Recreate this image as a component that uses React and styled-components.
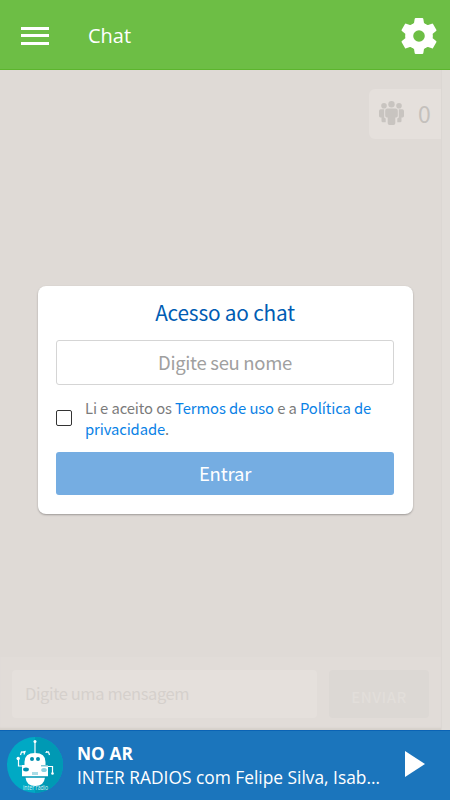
import { useState } from 'react'
import styled, { createGlobalStyle } from 'styled-components'

const GlobalStyle = createGlobalStyle`
  * {
    box-sizing: border-box;
  }

  body {
    margin: 0;
    font-family: 'Open Sans', 'Noto Sans', sans-serif;
  }

  button,
  input {
    font-family: inherit;
  }
`

export default function App() {
  return (
    <>
      <GlobalStyle/>
      <Screen>
        <Header>
          <MenuButton aria-label='Menu'><i/><i/><i/></MenuButton>
          <PageTitle>Chat</PageTitle>
          <IconButton aria-label='Configurações'><GearIcon/></IconButton>
        </Header>
        <ChatRoom/>
        <Player/>
      </Screen>
    </>
  )
}

function ChatRoom() {
  const [name, setName] = useState(''),
        [accepted, setAccepted] = useState(false)

  return (
    <Room>
      <Conversation>
        <Counter><PeopleIcon/>0</Counter>
        <MessageBar>
          <MessageInput placeholder='Digite uma mensagem' disabled/>
          <SendButton disabled>ENVIAR</SendButton>
        </MessageBar>
      </Conversation>
      <ScrollTrack/>
      <Overlay>
        <Card>
          <CardTitle>Acesso ao chat</CardTitle>
          <NameInput
            placeholder='Digite seu nome'
            value={name}
            onChange={e => setName(e.target.value)}
          />
          <Terms>
            <Checkbox
              type='checkbox'
              checked={accepted}
              onChange={e => setAccepted(e.target.checked)}
            />
            <span>Li e aceito os <a>Termos de uso</a> e a <a>Política de privacidade</a>.</span>
          </Terms>
          <EnterButton>Entrar</EnterButton>
        </Card>
      </Overlay>
    </Room>
  )
}

function Player() {
  return (
    <PlayerBar>
      <RobotLogo/>
      <NowPlaying>
        <strong>NO AR</strong>
        <p>INTER RADIOS com Felipe Silva, Isabela Costa</p>
      </NowPlaying>
      <PlayButton aria-label='Tocar'>
        <svg width='20' height='26' viewBox='0 0 20 26'><path d='M0 0L20 13L0 26Z' fill='#fff'/></svg>
      </PlayButton>
    </PlayerBar>
  )
}

function GearIcon() {
  const teeth = [0, 60, 120, 180, 240, 300]

  return (
    <svg width='36' height='38' viewBox='-18 -19 36 38'>
      <circle r='9.500' fill='none' stroke='#fff' strokeWidth='7.400'/>
      {teeth.map(angle => (
        <path
          key={angle}
          transform={`rotate(${angle})`}
          d='M-3.300 -17.100H3.300L4.100 -12.400L6.200 -11L3 -8H-3L-6.200 -11L-4.100 -12.400Z'
          fill='#fff'
          stroke='#fff'
          strokeWidth='2'
          strokeLinejoin='round'
        />
      ))}
    </svg>
  )
}

function PeopleIcon() {
  return (
    <svg width='25' height='24' viewBox='0 0 25 24' fill='#c8c4c0'>
      <circle cx='5' cy='4.700' r='2.800'/>
      <circle cx='20' cy='4.700' r='2.800'/>
      <circle cx='12.500' cy='3.200' r='3.200'/>
      <path d='M1.800 8.300h3.400v8.200l1.500 1v3.800H3.800q-1.300 0-1.300-1.300v-3.600H1.400Q0 16.400 0 15v-4.900Q0 8.300 1.800 8.300z'/>
      <path d='M23.200 8.300h-3.400v8.200l-1.500 1v3.800h2.900q1.300 0 1.300-1.300v-3.600h1.100q1.400 0 1.400-1.400v-4.900q0-1.800-1.800-1.800z'/>
      <path d='M8.500 7.400h8q2.300 0 2.300 2.200v5.200q0 1.600-1.600 1.600h-.9v5.800q0 1.800-1.800 1.800h-4q-1.800 0-1.800-1.800v-5.800h-.9q-1.600 0-1.600-1.600V9.600q0-2.200 2.300-2.200z'/>
    </svg>
  )
}

function RobotLogo() {
  return (
    <svg width='56' height='56' viewBox='0 0 56 56'>
      <circle cx='28' cy='28' r='28' fill='#00a9c4'/>
      <path d='M28 0a28 28 0 0 1 0 56z' fill='#0099b4'/>
      <g fill='none' stroke='#fff' strokeWidth='1.200'>
        <path d='M28 5v13M11.500 23v6H17M40 29.500h5.500V36'/>
        <path d='M13.500 18l1-3 3 .5M15 15l3-.5-1 3M38.500 15.500l3-.5 1 3M39 14.500l3 .8'/>
      </g>
      <g fill='#fff'>
        <circle cx='28' cy='4.500' r='1.500'/>
        <circle cx='11.200' cy='21.500' r='1.700'/>
        <circle cx='45.500' cy='36.500' r='1.300'/>
        <path d='M17.500 25q0-9 10.500-9t10.500 9v3h2.500v11.500H15V28h2.500z'/>
        <path d='M18.500 40.500h19.500q-1 8.500-9.800 8.500t-9.700-8.500z'/>
      </g>
      <g fill='#008fae'>
        <circle cx='25' cy='22' r='2'/>
        <circle cx='31' cy='22' r='2'/>
        <ellipse cx='19' cy='32.500' rx='2.900' ry='1.900'/>
        <path d='M15 39.500h26v1H15zM34 28.500h7v.8H34z'/>
      </g>
      <ellipse cx='37' cy='33' rx='2.800' ry='2' fill='#8bd2e2'/>
      <rect x='25' y='35' width='6' height='3' fill='#a9dce6'/>
      <text x='28.500' y='52.500' textAnchor='middle' textLength='25' lengthAdjust='spacingAndGlyphs' fontSize='6.800' fontFamily='Open Sans, sans-serif' fill='#d5f2f7'>inter radio</text>
    </svg>
  )
}

const chatFont = `'Noto Sans CJK SC', 'Source Sans Pro', sans-serif`

const Screen = styled.div`
  display: flex;
  flex-direction: column;
  height: 100vh;
  overflow: hidden;
`

const Header = styled.header`
  display: flex;
  align-items: center;
  flex: 0 0 70px;
  padding: 2px 13px 0 21px;
  background: #6dbe45;
  border-bottom: 1px solid #5cb52d;
  color: #fff;
`

const IconButton = styled.button`
  display: flex;
  padding: 0;
  border: 0;
  background: none;
  color: #fff;
  cursor: pointer;
`

const MenuButton = styled(IconButton)`
  flex-direction: column;
  gap: 4.500px;
  width: 28px;

  i {
    height: 3px;
    background: #fff;
  }
`

const PageTitle = styled.h1`
  flex: 1;
  margin: 0 0 0 39px;
  font-size: 20px;
  font-weight: 400;
`

const Room = styled.main`
  position: relative;
  display: flex;
  flex: 1;
  min-height: 0;
  background: #dfdad6;
  font-family: ${chatFont};
`

const Conversation = styled.section`
  display: flex;
  flex: 1;
  flex-direction: column;
  justify-content: space-between;
  align-items: flex-end;
  padding-top: 19px;
`

const ScrollTrack = styled.div`
  width: 9px;
  border-left: 1px solid #dbd7d3;
  background: #e1ddd9;
`

const Counter = styled.div`
  display: flex;
  align-items: center;
  gap: 14px;
  width: 72px;
  height: 50px;
  padding: 0 0 2px 10px;
  border-radius: 6px 0 0 6px;
  background: #e5e0dc;
  color: #c4c0bc;
  font-size: 23px;
  line-height: 1;
`

const MessageBar = styled.div`
  display: flex;
  align-self: stretch;
  gap: 12px;
  height: 73px;
  padding: 13px 12px;
  background: #e1dcd8;
  box-shadow: inset 0 -3px 2px -1px #d5d0cb;
`

const MessageInput = styled.input`
  flex: 1;
  min-width: 0;
  height: 48px;
  padding: 0 13px 2px;
  border: 0;
  border-radius: 4px;
  background: #e5e0dc;
  font-size: 16.500px;
  letter-spacing: -.4px;

  &::placeholder {
    color: #d5d0cc;
    opacity: 1;
  }
`

const SendButton = styled.button`
  width: 100px;
  height: 48px;
  padding: 5px 0 0;
  border: 0;
  border-radius: 4px;
  background: #dcd8d4;
  color: #e2deda;
  font-size: 15px;
  font-weight: 500;
  letter-spacing: .5px;
`

const Overlay = styled.div`
  position: absolute;
  inset: 0;
  display: flex;
  align-items: center;
  justify-content: center;
`

const Card = styled.form`
  display: flex;
  flex-direction: column;
  width: 375px;
  height: 228px;
  padding: 11px 18.500px 19px;
  border-radius: 8px;
  background: #fff;
  box-shadow: 0 1px 2px rgba(0, 0, 0, .3);
`

const CardTitle = styled.h2`
  margin: 0 0 13px;
  color: #005cb3;
  font-size: 20.800px;
  font-weight: 400;
  letter-spacing: -.2px;
  line-height: 30px;
  text-align: center;
`

const NameInput = styled.input`
  height: 45px;
  padding: 0 0 2px;
  border: 1px solid #d5d5d5;
  border-radius: 3px;
  color: #555;
  font-size: 18.500px;
  letter-spacing: -.3px;
  text-align: center;

  &::placeholder {
    color: #a0a0a0;
    opacity: 1;
  }
`

const Terms = styled.label`
  display: flex;
  align-items: center;
  gap: 13px;
  margin: 12px 0 13px;
  color: #7b7b7b;
  font-size: 14.800px;
  letter-spacing: -.1px;
  line-height: 21px;

  a {
    color: #0a82e6;
  }
`

const Checkbox = styled.input`
  flex: none;
  width: 16px;
  height: 16px;
  margin: 0;
  appearance: none;
  border: 1px solid #333;
  border-radius: 2px;

  &:checked {
    background: #0a82e6;
  }
`

const EnterButton = styled.button`
  height: 43px;
  padding: 0 0 2px;
  border: 0;
  border-radius: 3px;
  background: #75ade2;
  color: #fff;
  font-size: 18.500px;
  letter-spacing: -.2px;
`

const PlayerBar = styled.footer`
  display: flex;
  align-items: center;
  flex: 0 0 70px;
  padding: 0 25px 1px 7px;
  border-top: 1px solid #0b63b4;
  background: #1b75bc;
  color: #fff;
`

const NowPlaying = styled.div`
  width: 306px;
  margin-left: 14px;
  font-size: 17.350px;
  line-height: 24px;

  p {
    margin: 0;
    overflow: hidden;
    text-overflow: ellipsis;
    white-space: nowrap;
  }
`

const PlayButton = styled(IconButton)`
  margin: 0 0 2px auto;
`
